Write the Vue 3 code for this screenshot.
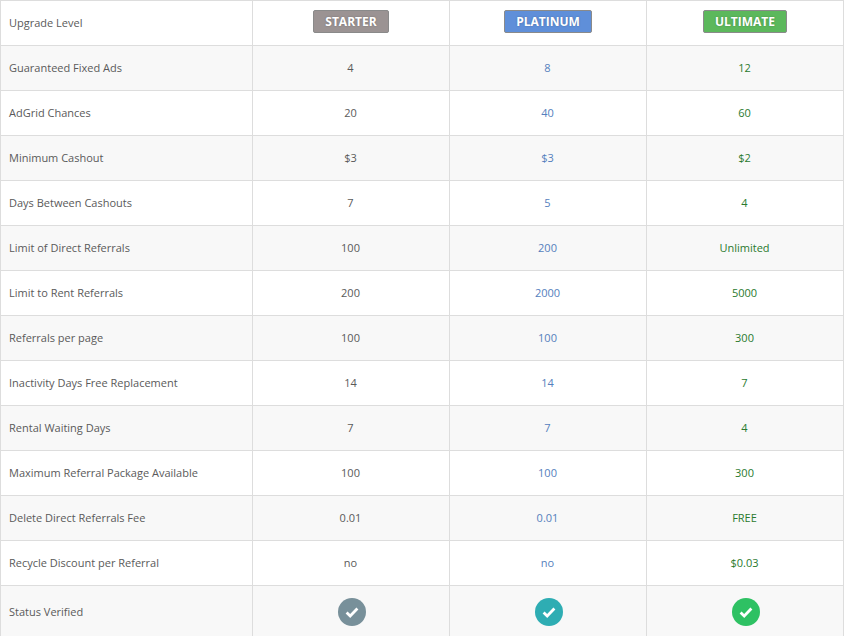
<script setup>
const plans = [
  { name: 'STARTER', key: 'starter' },
  { name: 'PLATINUM', key: 'platinum' },
  { name: 'ULTIMATE', key: 'ultimate' },
]
const rows = [
  ['Guaranteed Fixed Ads', '4', '8', '12'],
  ['AdGrid Chances', '20', '40', '60'],
  ['Minimum Cashout', '$3', '$3', '$2'],
  ['Days Between Cashouts', '7', '5', '4'],
  ['Limit of Direct Referrals', '100', '200', 'Unlimited'],
  ['Limit to Rent Referrals', '200', '2000', '5000'],
  ['Referrals per page', '100', '100', '300'],
  ['Inactivity Days Free Replacement', '14', '14', '7'],
  ['Rental Waiting Days', '7', '7', '4'],
  ['Maximum Referral Package Available', '100', '100', '300'],
  ['Delete Direct Referrals Fee', '0.01', '0.01', 'FREE'],
  ['Recycle Discount per Referral', 'no', 'no', '$0.03'],
]
</script>

<template>
  <div class="page">
    <table class="compare">
      <colgroup>
        <col class="label-col" />
        <col class="plan-col" />
        <col class="plan-col" />
        <col class="plan-col" />
      </colgroup>
      <tbody>
        <tr>
          <td class="label">Upgrade Level</td>
          <td v-for="p in plans" :key="p.key" class="val">
            <span class="badge" :class="p.key">{{ p.name }}</span>
          </td>
        </tr>
        <tr v-for="r in rows" :key="r[0]">
          <td class="label">{{ r[0] }}</td>
          <td class="val starter-t">{{ r[1] }}</td>
          <td class="val platinum-t">{{ r[2] }}</td>
          <td class="val ultimate-t">{{ r[3] }}</td>
        </tr>
        <tr class="last">
          <td class="label">Status Verified</td>
          <td v-for="p in plans" :key="p.key" class="val">
            <svg class="check" :class="'c-' + p.key" viewBox="0 0 28 28" width="28" height="28">
              <circle cx="14" cy="14" r="14" />
              <path d="M8.6 14.4l3.6 3.5 7.2-7.4" fill="none" stroke="#fff" stroke-width="2.8" />
            </svg>
          </td>
        </tr>
      </tbody>
    </table>
  </div>
</template>

<style>
html, body { margin: 0; background: #fff; }
</style>

<style scoped>
.page {
  width: 844px;
  height: 636px;
  overflow: hidden;
  font-family: "Open Sans", sans-serif;
  font-size: 11px;
  color: #555;
}
.compare {
  border-collapse: collapse;
  table-layout: fixed;
  width: 844px;
}
.label-col { width: 252px; }
.plan-col { width: 197px; }
tr { height: 45px; }
tr:nth-child(even) td { background: #f8f8f8; }
tr.last { height: 52px; }
td {
  border: 1px solid #ddd;
  padding: 0 0 2px;
  line-height: 15px;
  box-sizing: border-box;
}
tr.last td { padding-bottom: 0; }
.label { padding-left: 8px; color: #5a5a5a; }
.val { text-align: center; padding-right: 1px; }
tr.last .val { padding-right: 0; padding-left: 1px; }
.starter-t { color: #5a5a5a; }
.platinum-t { color: #5580bd; }
.ultimate-t { color: #2a7a2e; }
.badge {
  display: inline-block;
  box-sizing: border-box;
  height: 23px;
  line-height: 22px;
  border: 1px solid #8a8a8a;
  border-radius: 2px;
  padding: 0 11px;
  margin-bottom: 2px;
  margin-left: 1px;
  color: #fff;
  font-size: 12px;
  font-weight: 700;
  vertical-align: middle;
  text-shadow: 0 0 2px rgba(0, 0, 0, 0.25);
}
.badge.starter { background: #9b9393; }
.badge.platinum { background: #5f8fd9; }
.badge.ultimate { background: #5cb85c; }
.check { display: block; margin: 0 auto; }
.c-starter circle { fill: #78909a; }
.c-platinum circle { fill: #2eadb3; }
.c-ultimate circle { fill: #2ec163; }
</style>
